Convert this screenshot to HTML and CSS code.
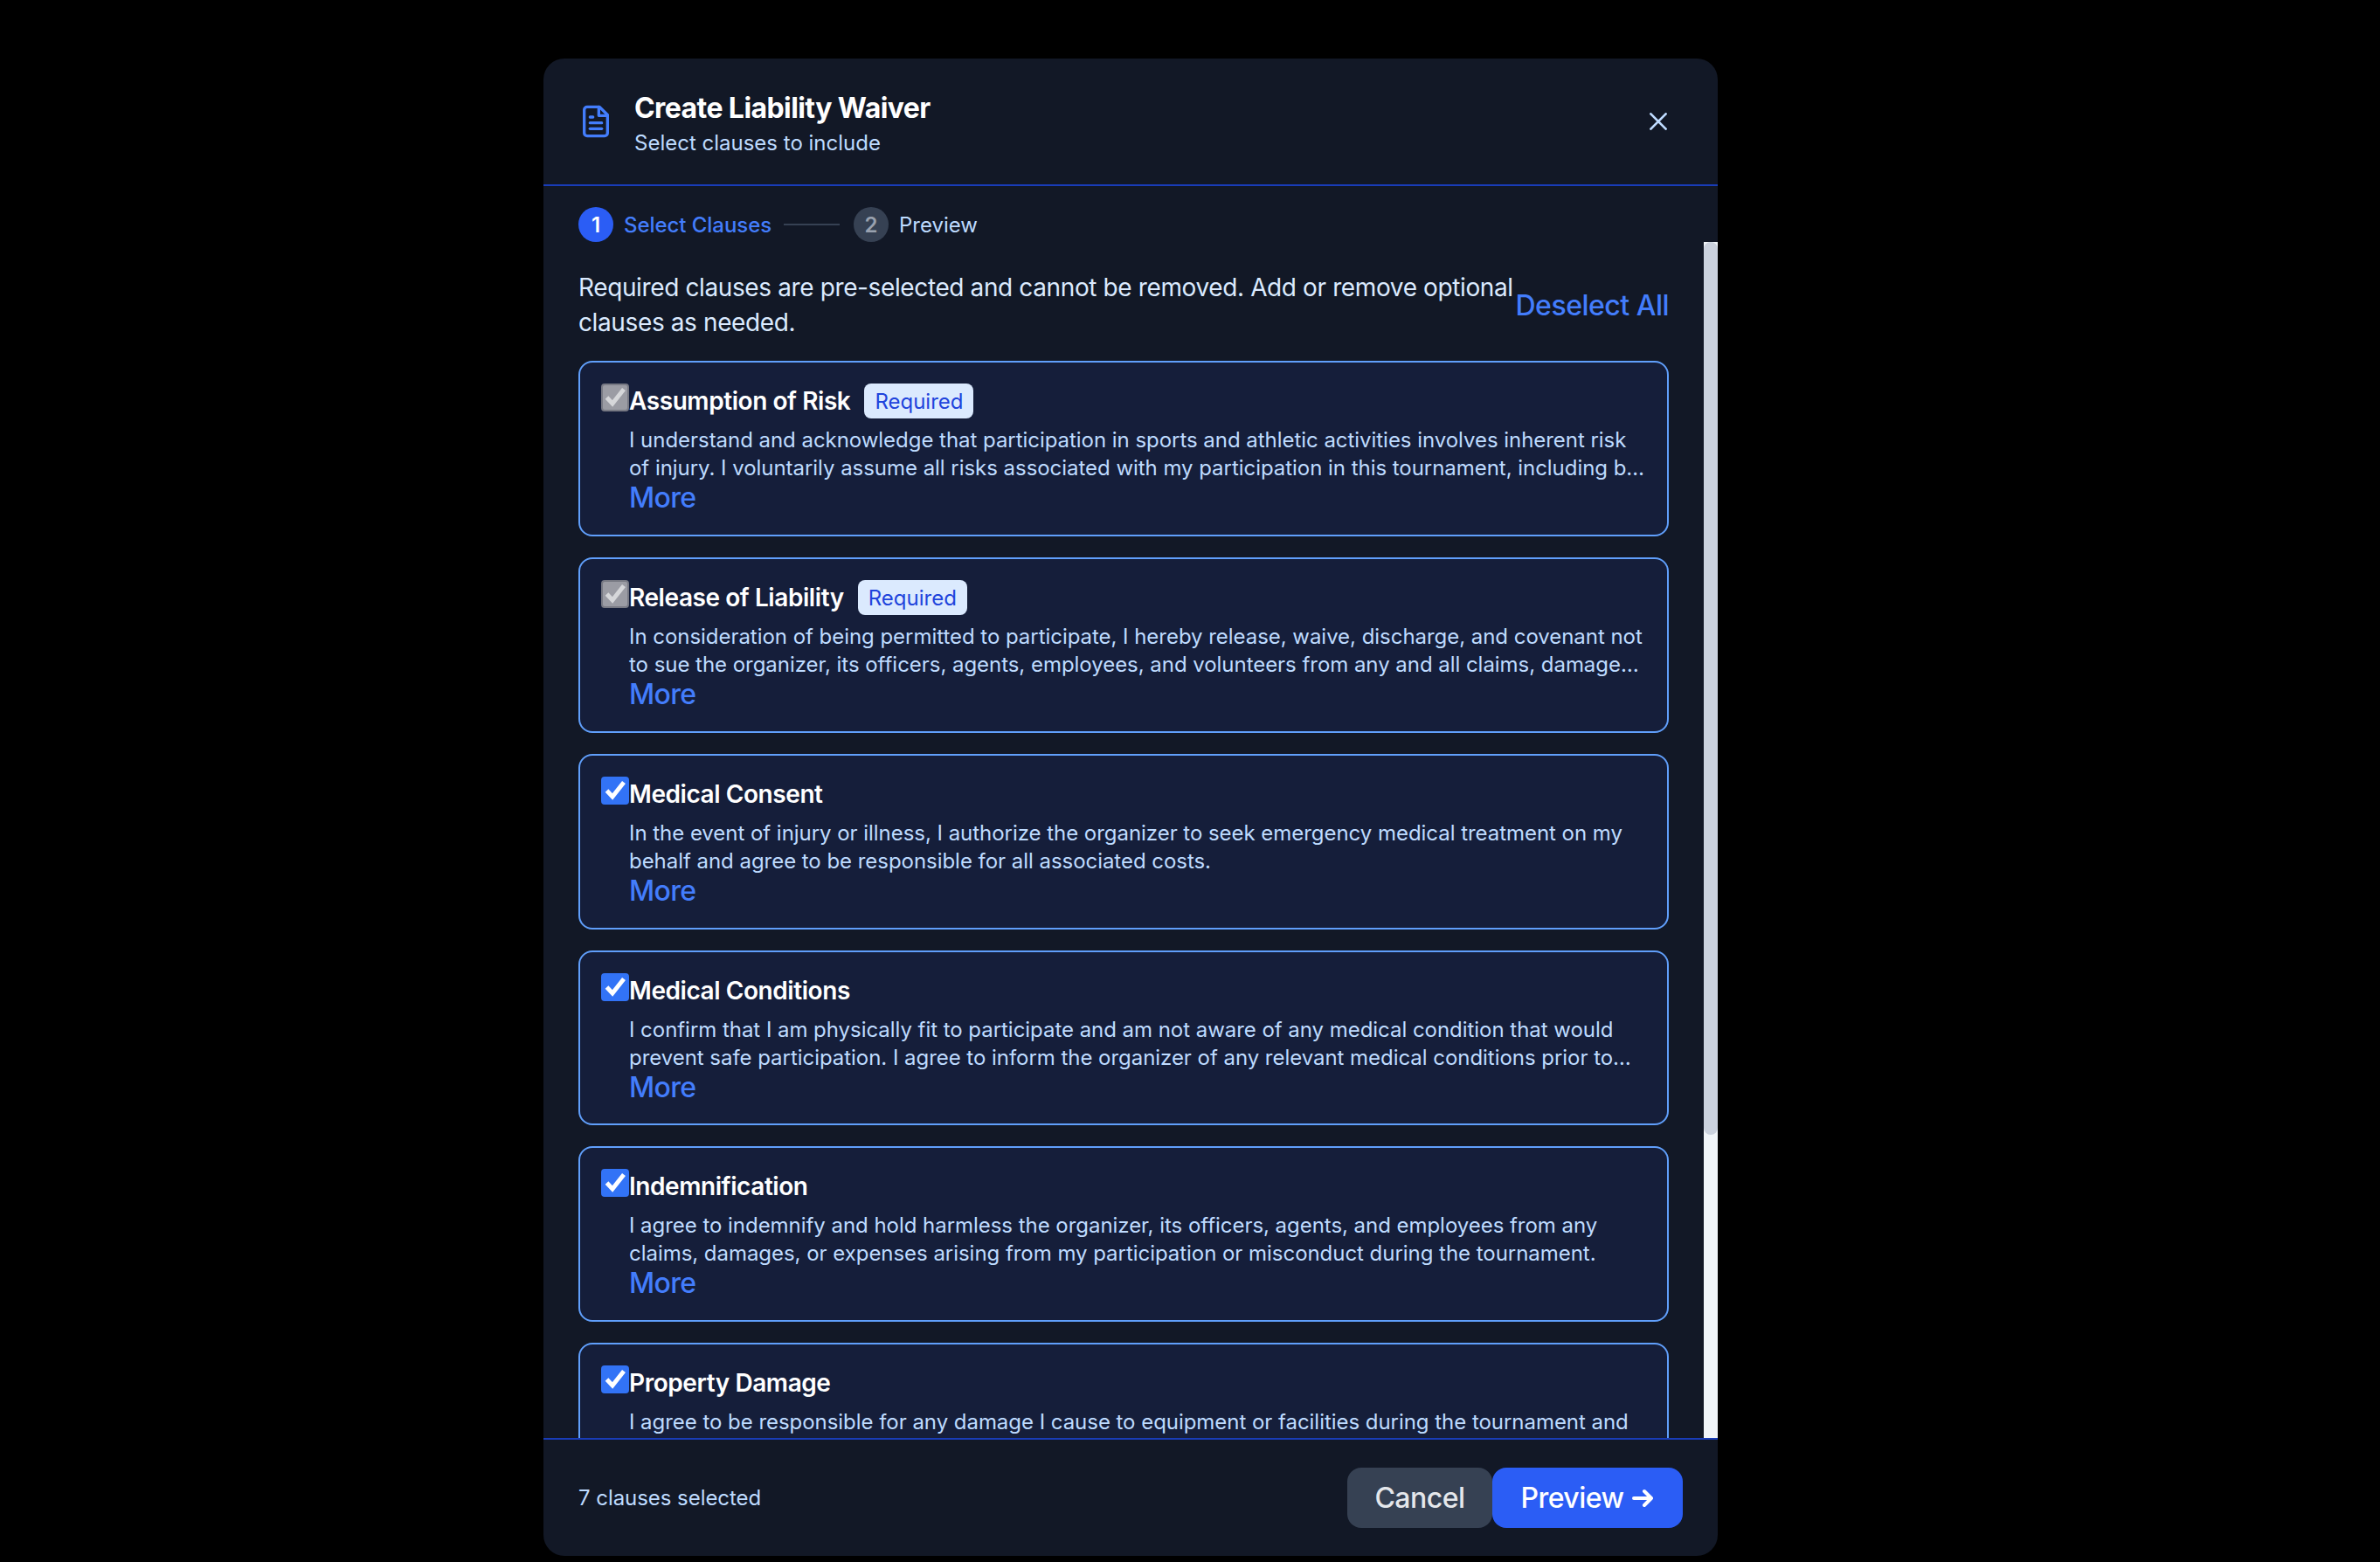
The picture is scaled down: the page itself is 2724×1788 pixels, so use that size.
FILE: index.html
```
<!DOCTYPE html>
<html lang="en">
<head>
    <meta charset="UTF-8">
    <meta name="viewport" content="width=device-width, initial-scale=1.0">
    <title>Create Liability Waiver</title>
    <link rel="stylesheet" href="styles.css">
</head>
<body>

    <div class="modal">
        <!-- Header -->
        <div class="modal-header">
            <svg class="file-icon" viewBox="0 0 24 24">
                <path d="M14.5 2H6a2 2 0 0 0-2 2v16a2 2 0 0 0 2 2h12a2 2 0 0 0 2-2V7.5L14.5 2z"/>
                <path d="M14 2v6h6"/>
                <path d="M10 9H8"/>
                <path d="M16 13H8"/>
                <path d="M16 17H8"/>
            </svg>
            <div class="modal-heading">
                <h2>Create Liability Waiver</h2>
                <p>Select clauses to include</p>
            </div>
            <button class="close-btn" aria-label="Close">
                <svg viewBox="0 0 20 20"><path d="M1.4 1.4l17.2 17.2M18.6 1.4L1.4 18.6"/></svg>
            </button>
        </div>

        <!-- Steps -->
        <div class="steps">
            <span class="step-number active">1</span>
            <span class="step-label active">Select Clauses</span>
            <span class="step-line"></span>
            <span class="step-number">2</span>
            <span class="step-label">Preview</span>
        </div>

        <!-- Clause list -->
        <div class="modal-body">
            <div class="clauses">
                <div class="intro">
                    <p>Required clauses are pre-selected and cannot be removed. Add or remove optional<br>clauses as needed.</p>
                    <button class="link-btn">Deselect All</button>
                </div>

                <div class="clause">
                    <svg class="check disabled" viewBox="0 0 32 32"><rect x="1" y="1" width="30" height="30" rx="3"/><path d="M6.5 16L13 23L26 6.5"/></svg>
                    <div class="clause-content">
                        <div class="clause-title"><h3>Assumption of Risk</h3><span class="badge">Required</span></div>
                        <p>I understand and acknowledge that participation in sports and athletic activities involves inherent risk<br>of injury. I voluntarily assume all risks associated with my participation in this tournament, including b…</p>
                        <button class="link-btn more">More</button>
                    </div>
                </div>

                <div class="clause">
                    <svg class="check disabled" viewBox="0 0 32 32"><rect x="1" y="1" width="30" height="30" rx="3"/><path d="M6.5 16L13 23L26 6.5"/></svg>
                    <div class="clause-content">
                        <div class="clause-title"><h3>Release of Liability</h3><span class="badge">Required</span></div>
                        <p>In consideration of being permitted to participate, I hereby release, waive, discharge, and covenant not<br>to sue the organizer, its officers, agents, employees, and volunteers from any and all claims, damage…</p>
                        <button class="link-btn more">More</button>
                    </div>
                </div>

                <div class="clause">
                    <svg class="check" viewBox="0 0 32 32"><rect x="1" y="1" width="30" height="30" rx="3"/><path d="M6.5 16L13 23L26 6.5"/></svg>
                    <div class="clause-content">
                        <div class="clause-title"><h3>Medical Consent</h3></div>
                        <p>In the event of injury or illness, I authorize the organizer to seek emergency medical treatment on my<br>behalf and agree to be responsible for all associated costs.</p>
                        <button class="link-btn more">More</button>
                    </div>
                </div>

                <div class="clause">
                    <svg class="check" viewBox="0 0 32 32"><rect x="1" y="1" width="30" height="30" rx="3"/><path d="M6.5 16L13 23L26 6.5"/></svg>
                    <div class="clause-content">
                        <div class="clause-title"><h3>Medical Conditions</h3></div>
                        <p>I confirm that I am physically fit to participate and am not aware of any medical condition that would<br>prevent safe participation. I agree to inform the organizer of any relevant medical conditions prior to…</p>
                        <button class="link-btn more">More</button>
                    </div>
                </div>

                <div class="clause">
                    <svg class="check" viewBox="0 0 32 32"><rect x="1" y="1" width="30" height="30" rx="3"/><path d="M6.5 16L13 23L26 6.5"/></svg>
                    <div class="clause-content">
                        <div class="clause-title"><h3>Indemnification</h3></div>
                        <p>I agree to indemnify and hold harmless the organizer, its officers, agents, and employees from any<br>claims, damages, or expenses arising from my participation or misconduct during the tournament.</p>
                        <button class="link-btn more">More</button>
                    </div>
                </div>

                <div class="clause">
                    <svg class="check" viewBox="0 0 32 32"><rect x="1" y="1" width="30" height="30" rx="3"/><path d="M6.5 16L13 23L26 6.5"/></svg>
                    <div class="clause-content">
                        <div class="clause-title"><h3>Property Damage</h3></div>
                        <p>I agree to be responsible for any damage I cause to equipment or facilities during the tournament and</p>
                    </div>
                </div>
            </div>
            <div class="scrollbar"><div class="scrollbar-thumb"></div></div>
        </div>

        <!-- Footer -->
        <div class="modal-footer">
            <span class="count">7 clauses selected</span>
            <button class="btn btn-cancel">Cancel</button>
            <button class="btn btn-preview">Preview
                <svg viewBox="0 0 24 24"><path d="M2 12h20M14 4l8 8-8 8"/></svg>
            </button>
        </div>
    </div>

</body>
</html>
```

FILE: styles.css
```
* {
    box-sizing: border-box;
}

body {
    margin: 0;
    height: 1788px;
    padding-top: 67px;
    padding-left: 622px;
    overflow: hidden;
    background-color: #000;
    font-family: Inter, "Liberation Sans", sans-serif;
    font-size: 24px;
    line-height: 32px;
    color: #bedbff;
}

h2, h3, p {
    margin: 0;
}

button {
    border: none;
    padding: 0;
    background: none;
    font-family: inherit;
    cursor: pointer;
}

.modal {
    width: 1344px;
    height: 1714px;
    display: flex;
    flex-direction: column;
    background-color: #121826;
    border-radius: 24px;
    overflow: hidden;
}

.modal-header {
    height: 146px;
    flex-shrink: 0;
    display: flex;
    align-items: center;
    padding: 0 58px 0 40px;
    border-bottom: 2px solid #193cb8;
}

.file-icon {
    width: 40px;
    height: 40px;
    margin-right: 24px;
    fill: none;
    stroke: #437dfc;
    stroke-width: 2;
    stroke-linecap: round;
    stroke-linejoin: round;
}

.modal-heading {
    flex: 1;
    padding-top: 3px;
}

h2 {
    margin-bottom: 2px;
    font-size: 32px;
    line-height: 45px;
    font-weight: 700;
    letter-spacing: -0.58px;
    color: #fff;
}

.close-btn {
    display: flex;
}

.close-btn svg {
    width: 20px;
    height: 20px;
    fill: none;
    stroke: #bedbff;
    stroke-width: 2.7;
    stroke-linecap: round;
}

/* Steps */
.steps {
    height: 64px;
    flex-shrink: 0;
    display: flex;
    align-items: center;
    padding: 24px 40px 0;
}

.step-number {
    width: 40px;
    height: 40px;
    margin-right: 12px;
    border-radius: 50%;
    text-align: center;
    line-height: 41px;
    font-weight: 600;
    background-color: #364153;
    color: #99a1af;
}

.step-number.active {
    background-color: #2b5df5;
    color: #fff;
}

.step-label {
    padding-top: 1px;
}

.step-label.active {
    width: 171px;
    font-weight: 500;
    letter-spacing: -0.05px;
    color: #437dfc;
}

.step-line {
    width: 64px;
    height: 2px;
    margin: 0 16px 0 12px;
    background-color: #364153;
}

/* Clauses */
.modal-body {
    flex: 1;
    min-height: 0;
    display: flex;
    overflow: hidden;
}

.clauses {
    width: 1328px;
    padding: 32.3px 40px;
}

.intro {
    display: flex;
    align-items: center;
    justify-content: space-between;
    height: 80px;
    margin-bottom: 24px;
    font-size: 28px;
    line-height: 40px;
    letter-spacing: -0.38px;
    color: #dbeafe;
    white-space: nowrap;
}

.link-btn {
    display: block;
    font-size: 32px;
    line-height: 37px;
    font-weight: 500;
    letter-spacing: -0.5px;
    color: #437dfc;
}

.link-btn.more {
    letter-spacing: -0.7px;
}

.clause {
    display: flex;
    height: 200.8px;
    margin-bottom: 24px;
    padding: 24px;
    border: 2px solid #609ffb;
    border-radius: 16px;
    background-color: #151e3a;
}

.check {
    width: 32px;
    height: 32px;
    flex-shrink: 0;
}

.check rect {
    fill: #3273f6;
    stroke: #3273f6;
    stroke-width: 2;
}

.check path {
    fill: none;
    stroke: #fff;
    stroke-width: 5;
}

.check.disabled rect {
    fill: #9b9ca4;
    stroke: #787a84;
}

.check.disabled path {
    stroke: #d6d7da;
}

.clause-title {
    display: flex;
    align-items: center;
    height: 40px;
    margin-bottom: 8px;
}

h3 {
    font-size: 28px;
    line-height: 40px;
    font-weight: 600;
    letter-spacing: -0.43px;
    color: #fff;
}

.badge {
    margin-left: 16px;
    padding: 5px 12px 3px;
    border-radius: 8px;
    background-color: #dbeafe;
    color: #1f44dc;
}

.clause p {
    padding-top: 1px;
    margin-bottom: -1px;
    letter-spacing: -0.04px;
    white-space: nowrap;
}

.scrollbar {
    width: 16px;
    background-color: #f1f5f9;
}

.scrollbar-thumb {
    height: 1022px;
    border-radius: 8px;
    background-color: #cbd2de;
}

/* Footer */
.modal-footer {
    height: 135px;
    flex-shrink: 0;
    display: flex;
    align-items: center;
    padding: 0 40px;
    border-top: 2px solid #193cb8;
}

.count {
    flex: 1;
    letter-spacing: -0.05px;
}

.btn {
    display: flex;
    align-items: center;
    justify-content: center;
    height: 69px;
    border-radius: 16px;
    font-size: 32px;
    font-weight: 500;
    letter-spacing: -0.5px;
}

.btn-cancel {
    width: 166px;
    background-color: #364153;
    color: #e5e7eb;
}

.btn-preview {
    width: 218px;
    background-color: #2b5df5;
    color: #fff;
}

.btn svg {
    width: 24px;
    height: 24px;
    margin-left: 9px;
    margin-right: 2px;
    fill: none;
    stroke: #fff;
    stroke-width: 4;
    stroke-linecap: round;
    stroke-linejoin: round;
}
```
